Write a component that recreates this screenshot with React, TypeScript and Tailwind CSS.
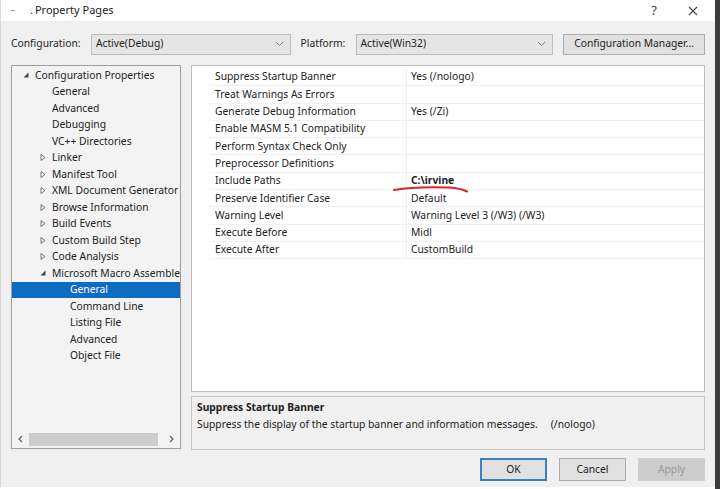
const FONT = "font-['Segoe_UI','Noto_Sans','Liberation_Sans',sans-serif]";

type TreeItem = {
  label: string;
  level: 0 | 1 | 2;
  arrow?: "open" | "closed";
  selected?: boolean;
};

const treeItems: TreeItem[] = [
  { label: "Configuration Properties", level: 0, arrow: "open" },
  { label: "General", level: 1 },
  { label: "Advanced", level: 1 },
  { label: "Debugging", level: 1 },
  { label: "VC++ Directories", level: 1 },
  { label: "Linker", level: 1, arrow: "closed" },
  { label: "Manifest Tool", level: 1, arrow: "closed" },
  { label: "XML Document Generator", level: 1, arrow: "closed" },
  { label: "Browse Information", level: 1, arrow: "closed" },
  { label: "Build Events", level: 1, arrow: "closed" },
  { label: "Custom Build Step", level: 1, arrow: "closed" },
  { label: "Code Analysis", level: 1, arrow: "closed" },
  { label: "Microsoft Macro Assembler", level: 1, arrow: "open" },
  { label: "General", level: 2, selected: true },
  { label: "Command Line", level: 2 },
  { label: "Listing File", level: 2 },
  { label: "Advanced", level: 2 },
  { label: "Object File", level: 2 },
];

const props: [string, string, boolean?][] = [
  ["Suppress Startup Banner", "Yes (/nologo)"],
  ["Treat Warnings As Errors", ""],
  ["Generate Debug Information", "Yes (/Zi)"],
  ["Enable MASM 5.1 Compatibility", ""],
  ["Perform Syntax Check Only", ""],
  ["Preprocessor Definitions", ""],
  ["Include Paths", "C:\\irvine", true],
  ["Preserve Identifier Case", "Default"],
  ["Warning Level", "Warning Level 3 (/W3) (/W3)"],
  ["Execute Before", "Midl"],
  ["Execute After", "CustomBuild"],
];

const Chevron = () => (
  <svg width="9" height="6" viewBox="0 0 9 6" className="shrink-0">
    <path d="M1 1 L4.5 4.5 L8 1" fill="none" stroke="#7a7a7a" strokeWidth="1" />
  </svg>
);

const Arrow = ({ kind }: { kind: "open" | "closed" }) =>
  kind === "open" ? (
    <svg width="8" height="8" viewBox="0 0 8 8">
      <path d="M6.5 1.5 L6.5 6.5 L1.5 6.5 Z" fill="#444" />
    </svg>
  ) : (
    <svg width="8" height="9" viewBox="0 0 8 9">
      <path d="M2 1.5 L6 4.5 L2 7.5 Z" fill="none" stroke="#777" strokeWidth="1" />
    </svg>
  );

const Dropdown = ({ value, width }: { value: string; width: string }) => (
  <div
    className={`${width} h-[21px] flex items-center justify-between border border-[#bdbdbd] bg-[#e5e5e5] pl-[4px] pr-[6px]`}
  >
    <span>{value}</span>
    <Chevron />
  </div>
);

const Button = ({
  label,
  variant,
}: {
  label: string;
  variant?: "default" | "disabled";
}) => (
  <div
    className={`w-[67px] h-[23px] flex items-center justify-center ${
      variant === "default"
        ? "border-2 border-[#3c7fc4] bg-[#e1e1e1] text-[#222]"
        : variant === "disabled"
          ? "border border-[#cfcfcf] bg-[#cccccc] text-[#9a9a9a]"
          : "border border-[#adadad] bg-[#e1e1e1] text-[#222]"
    }`}
  >
    {label}
  </div>
);

export default function App() {
  return (
    <div className={`${FONT} w-[720px] h-[489px] flex bg-white text-[10.3px] text-[#222] overflow-hidden`}>
      <div className="w-[715px] h-[487px] flex flex-col border-l border-[#d8d8d8]">
        {/* title bar */}
        <div className="h-[22px] flex items-center bg-white text-[11px]">
          <span className="ml-[10px] w-[4px] h-[1px] bg-[#999]" />
          <span className="ml-[15px] text-[#333]">.</span>
          <span className="ml-[2px] text-[#222]">Property Pages</span>
          <span className="ml-auto text-[13px] text-[#444]">?</span>
          <svg width="10" height="10" viewBox="0 0 10 10" className="ml-[31px] mr-[17px]">
            <path d="M1 1 L9 9 M9 1 L1 9" stroke="#444" strokeWidth="1.1" />
          </svg>
        </div>

        {/* body */}
        <div className="flex-1 flex flex-col bg-[#f0f0f0] px-[10px] pt-[12px] pb-[6px]">
          {/* configuration row */}
          <div className="h-[22px] flex items-center">
            <span className="w-[80px]">Configuration:</span>
            <Dropdown value="Active(Debug)" width="w-[200px]" />
            <span className="ml-[10px] w-[55px]">Platform:</span>
            <Dropdown value="Active(Win32)" width="w-[198px]" />
            <div className="ml-[10px] w-[142px] h-[21px] flex items-center justify-center border border-[#adadad] bg-[#e1e1e1]">
              Configuration Manager...
            </div>
          </div>

          <div className="mt-[10px] flex gap-[10px]">
            {/* tree */}
            <div className="w-[170px] h-[384px] flex flex-col border border-[#9e9e9e] bg-[#f3f3f3]">
              <div className="flex-1 pt-[1px]">
                {treeItems.map((it, i) => (
                  <div
                    key={i}
                    className={`h-[16.5px] flex items-center whitespace-nowrap overflow-hidden ${
                      it.selected ? "bg-[#0f6cc4] text-white" : ""
                    }`}
                  >
                    <div
                      className={`shrink-0 flex items-center justify-end pr-[5px] ${
                        it.level === 0 ? "w-[23px]" : it.level === 1 ? "w-[40px]" : "w-[58px]"
                      }`}
                    >
                      {it.arrow && <Arrow kind={it.arrow} />}
                    </div>
                    <span>{it.label}</span>
                  </div>
                ))}
              </div>
              <div className="h-[16px] mb-[1px] flex items-center">
                <svg width="17" height="16" viewBox="0 0 17 16">
                  <path d="M10 5 L7 8 L10 11" fill="none" stroke="#666" strokeWidth="1.3" />
                </svg>
                <div className="flex-1 h-[13px] mr-[5px] bg-[#cdcdcd]" />
                <svg width="17" height="16" viewBox="0 0 17 16">
                  <path d="M7 5 L10 8 L7 11" fill="none" stroke="#666" strokeWidth="1.3" />
                </svg>
              </div>
            </div>

            {/* right side */}
            <div className="flex-1 flex flex-col">
              <div className="h-[327px] border border-[#bcbcbc] bg-white pl-[17px] pt-[3px]">
                {props.map(([name, value, bold], i) => (
                  <div key={i} className="h-[17.3px] flex items-center border-b border-[#f1f1f1]">
                    <span className="w-[198px] pl-[6px] h-full flex items-center border-r border-[#f1f1f1]">
                      {name}
                    </span>
                    <span className={`pl-[4px] relative ${bold ? "font-bold" : ""}`}>
                      {value}
                      {bold && (
                        <svg
                          width="76"
                          height="9"
                          viewBox="0 0 76 9"
                          className="absolute left-[-14px] top-[12px]"
                        >
                          <path
                            d="M1 5 C 15 2.5, 40 2, 56 2.5 C 64 3, 70 4.5, 74 6.5"
                            fill="none"
                            stroke="#d8262a"
                            strokeWidth="2"
                            strokeLinecap="round"
                          />
                        </svg>
                      )}
                    </span>
                  </div>
                ))}
              </div>
              <div className="mt-[4px] h-[54px] border border-[#c8c8c8] bg-[#f0f0f0] px-[5px] pt-[3px]">
                <div className="font-bold">Suppress Startup Banner</div>
                <div className="mt-[2px]">
                  Suppress the display of the startup banner and information messages.
                  <span className="ml-[13px]">(/nologo)</span>
                </div>
              </div>
            </div>
          </div>

          {/* buttons */}
          <div className="mt-[8px] flex justify-end gap-[12px]">
            <Button label="OK" variant="default" />
            <Button label="Cancel" />
            <Button label="Apply" variant="disabled" />
          </div>
        </div>
      </div>
      <div className="flex-1 bg-[#3c3c3c]" />
    </div>
  );
}
